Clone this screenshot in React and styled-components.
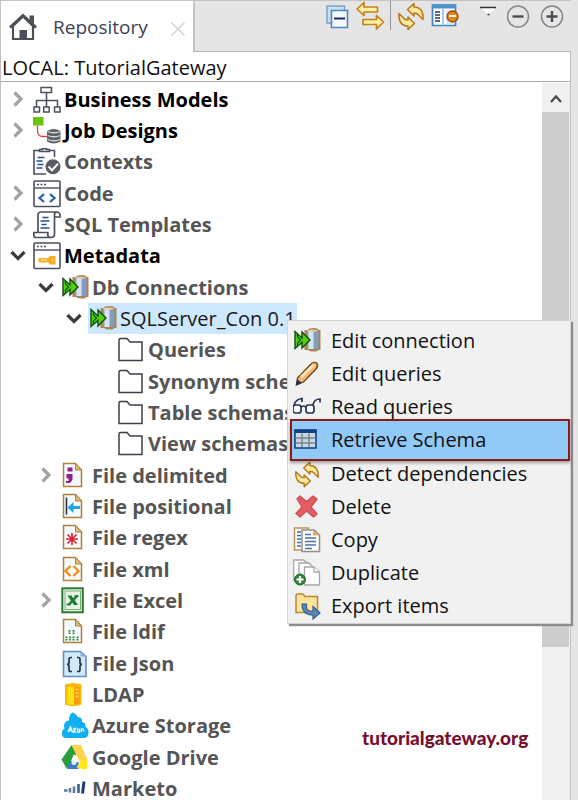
import { useState } from "react";
import styled, { createGlobalStyle, css } from "styled-components";

const GlobalStyle = createGlobalStyle`
  * {
    box-sizing: border-box;
  }

  body {
    margin: 0;
    background-color: #e5e5e5;
    font-family: "Open Sans", "Noto Sans", sans-serif;
  }

  button {
    border: none;
    background: none;
    padding: 0;
    margin: 0;
    font: inherit;
    color: inherit;
    cursor: pointer;
  }
`;

const Window = styled.main`
  position: relative;
  height: 100vh;
  padding-right: 7px;
  display: flex;
  flex-direction: column;
  overflow: hidden;
  background-color: #e5e5e5;
`;

const TabBar = styled.header`
  flex-shrink: 0;
  height: 52px;
  display: flex;
  justify-content: space-between;
  border-top: 1px solid #c4c4c4;
`;

const Tab = styled.div`
  width: 195px;
  display: flex;
  align-items: center;
  gap: 16px;
  padding: 0 7px 0 8px;
  background-color: #fff;
  border-right: 2px solid #c4c4c4;
  border-left: 1px solid #c4c4c4;
  border-radius: 0 2px 0 0;
  color: #3c4354;
  font-size: 19px;
  line-height: 28px;

  .close {
    margin-left: auto;
    padding-top: 4px;
  }
`;

const Toolbar = styled.div`
  flex: 1;
  display: flex;
  justify-content: flex-end;
  gap: 15px;
  padding-right: 4px;
  border-bottom: 1px solid #b4b4b4;
`;

const ToolGroup = styled.div`
  display: flex;
  gap: 4px;
`;

const ToolButton = styled.button`
  width: ${({ $narrow }) => ($narrow ? "24px" : "30px")};
  height: 30px;
`;

const Separator = styled.span`
  width: 1px;
  height: 29px;
  margin-right: 1px;
  background-color: #969696;
`;

const Panel = styled.section`
  flex: 1;
  min-height: 0;
  display: flex;
  flex-direction: column;
  background-color: #fff;
  border-left: 1px solid #c0c0c0;
  border-right: 1px solid #c0c0c0;
`;

const Branch = styled.div`
  flex-shrink: 0;
  height: 30px;
  padding: 3px 1px 0;
  border-bottom: 1px solid #a8a8a8;
  color: #111;
  font-size: 20px;
  line-height: 26px;
`;

const TreeArea = styled.div`
  flex: 1;
  min-height: 0;
  display: flex;
  padding-top: 1px;
`;

const Tree = styled.ul`
  flex: 1;
  margin: 0;
  padding: 1px 0 0 3px;
  list-style: none;
  overflow: hidden;
`;

const TreeRow = styled.li`
  display: flex;
  align-items: center;
  height: 31px;
  padding-left: ${({ $level }) => $level * 28}px;

  &:nth-child(3n) {
    height: 32px;
  }
`;

const Expander = styled.button`
  width: 28px;
  height: 28px;
  flex-shrink: 0;
`;

const TreeLabel = styled.button`
  height: 31px;
  display: flex;
  align-items: center;
  gap: 3px;
  padding: 0 1px;
  color: ${({ $strong }) => ($strong ? "#000" : "#555")};
  font-size: 20px;
  font-weight: 700;
  line-height: 28px;
  white-space: nowrap;

  ${({ $selected }) =>
    $selected &&
    css`
      background-color: #cde8ff;
      color: #1a1a1a;
      font-weight: 400;
    `}
`;

const ScrollTrack = styled.div`
  width: 28px;
  flex-shrink: 0;
  display: flex;
  flex-direction: column;
  background-color: #f0f0f0;
`;

const ScrollUp = styled.button`
  height: 29px;
`;

const ScrollThumb = styled.div`
  flex: 7;
  margin-right: 1px;
  background-color: #cdcdcd;
`;

const ScrollRest = styled.div`
  flex: 2;
`;

const Menu = styled.ul`
  position: absolute;
  top: 320px;
  left: 287px;
  width: 284px;
  margin: 0;
  padding: 3px 0 1px 2px;
  list-style: none;
  background-color: #f1f1f1;
  border: 1px solid #d4d4d4;
  box-shadow: 2px 2px 1px #8c8c8c;
`;

const MenuItem = styled.button`
  width: 100%;
  height: 33px;
  display: flex;
  align-items: center;
  gap: 10px;
  padding: 0 3px;
  color: #111;
  font-size: 20px;
  line-height: 28px;

  ${({ $active }) =>
    $active &&
    css`
      position: relative;
      height: 42px;
      margin: -4px 0;
      padding: 0 1px;
      background-color: #91c9f7;
      border: 2px solid #8e1a16;
      box-shadow: 0 2px 3px rgba(0, 0, 0, 0.35);
    `}
`;

const Watermark = styled.a`
  position: absolute;
  top: 726px;
  left: 362px;
  color: #75102f;
  font-family: Lato, sans-serif;
  font-size: 19px;
  font-weight: 900;
  line-height: 24px;
  text-decoration: none;
`;

const Svg = styled.svg`
  display: block;
  flex-shrink: 0;
`;

const Icon = ({ size = 28, width, children }) => (
  <Svg
    width={width || size}
    height={size}
    viewBox={`0 0 ${width || size} ${size}`}
    fill="none"
    aria-hidden="true"
  >
    {children}
  </Svg>
);

/* ---- tree icons ---- */

const Chevron = ({ open }) => (
  <Icon>
    {open ? (
      <path d="M7.500 10l6.500 6.500L20.500 10" stroke="#3c3c40" strokeWidth="3.200" />
    ) : (
      <path d="M10.500 6.500l6.500 6.500-6.500 6.500" stroke="#a3a3a3" strokeWidth="3.200" />
    )}
  </Icon>
);

const BusinessIcon = () => (
  <Icon>
    <g stroke="#4b5060" strokeWidth="1.500">
      <path d="M8 1.500h10.500v5H8zM13.500 7v14M3.500 21v-6.500h21V21" />
      <path d="M1 21h5.500v5H1zM10.700 21h5.500v5h-5.500zM21.500 21H27v5h-5.500z" fill="#fff" />
    </g>
  </Icon>
);

const JobIcon = () => (
  <Icon>
    <path d="M0 0h10.500v8.500H0z" fill="#68c40f" />
    <path d="M4.500 8.500v5q0 6 5 6H15" stroke="#cf4a44" strokeWidth="1.300" />
    <path d="M14 14q6.700-4 13.500 0v10.500q-6.800 4-13.500 0z" fill="#60646a" />
    <path
      d="M14.500 14.500q6.500 2.500 13 0M14.500 18.500q6.500 2.500 13 0M14.500 22.500q6.500 2.500 13 0"
      stroke="#d5d7da"
      strokeWidth="1.300"
    />
  </Icon>
);

const ContextIcon = () => (
  <Icon>
    <path d="M6 2.500H1V26h12M17 2.500h4.500V9" stroke="#4b5060" strokeWidth="1.600" />
    <path d="M6.500 3.500h10V1.500h-3V.7h-4v.8h-3z" stroke="#4b5060" strokeWidth="1.500" />
    <path d="M4.500 9.500h7M3.500 13h6M4.500 16.500h6M3.500 20h6" stroke="#254d9a" strokeWidth="1.400" />
    <circle cx="20" cy="18.700" r="7.500" fill="#585c66" />
    <path d="M15.500 18.500l3.500 3.700 6-6.500" stroke="#fff" strokeWidth="2" />
  </Icon>
);

const WindowFrame = () => (
  <>
    <rect x="1" y="1" width="26" height="25.500" rx="1" fill="#fff" stroke="#4b5060" strokeWidth="1.600" />
    <path d="M1 8h26" stroke="#4b5060" strokeWidth="1.400" />
    <path d="M4 4.500h10" stroke="#4b5060" strokeWidth="1.600" strokeDasharray="2 1.500" />
  </>
);

const CodeIcon = () => (
  <Icon>
    <WindowFrame />
    <path d="M11 14l-4.500 4 4.500 4M17 14l4.500 4-4.500 4" stroke="#1f66ad" strokeWidth="2.300" />
  </Icon>
);

const SqlIcon = () => (
  <Icon>
    <path
      d="M5 21V4q0-3 3-3h15q4 0 4 3v2h-5.500M21.500 6V23q0 3.500-3.500 3.500H3Q.8 26.500.8 24v-2.500h14V24q0 2.500 3.200 2.500M21.500 6V3.500q0-2 2-2"
      stroke="#4b5060"
      strokeWidth="1.700"
    />
    <path d="M9.500 6.500h6M7.500 10h9M8.500 13.500h5M7.500 17h9" stroke="#254d9a" strokeWidth="1.500" />
  </Icon>
);

const MetadataIcon = () => (
  <Icon>
    <WindowFrame />
    <path d="M5.500 16H15l2-2h5.500v8.500H17l-2-2H5.500z" fill="#faac24" />
    <path d="M8 18h6M18.500 18h2" stroke="#ffdf9c" strokeWidth="1.300" />
  </Icon>
);

const DbIcon = () => (
  <Icon>
    <path d="M11.500 3h3q1-2 6-2t5 2h2v20h-2q-1 1.500-5 1.500T15 23h-3.500z" fill="#a98555" />
    <path d="M14 4h11.500v18H14z" fill="#819ebf" />
    <path d="M15.500 4h5v18h-5z" fill="#d8e5f0" />
    <path d="M13 3.500q7-2 12.500 0-5 2.500-12.500 0z" fill="#e4cda6" />
    <path d="M2 4.500l7 6.500V5l8 8-8 8v-5.500L2 21.500z" fill="#4bd40c" stroke="#164b10" strokeWidth="1.400" />
    <path d="M4.500 7v3l3 3-3 3v3" stroke="#164b10" strokeWidth="1.200" />
  </Icon>
);

const FolderIcon = () => (
  <Icon>
    <path d="M2 24V4q0-1.500 1.500-1.500H10L13 6h12v18.500H2z" fill="#fff" stroke="#3e3e4a" strokeWidth="1.500" />
  </Icon>
);

const FileIcon = ({ children }) => (
  <Icon>
    <path d="M2.500 1.500h12L20.500 8v16.500h-18z" fill="#f3f9ff" stroke="#b18136" strokeWidth="1.500" />
    <path d="M14.500 1.500V8h6z" fill="#e2bc7a" stroke="#b18136" />
    {children}
  </Icon>
);

const DelimitedIcon = () => (
  <FileIcon>
    <path d="M6.500 5.500h5v4h-5zM5.500 12h6v6L9 21H5v-2h2.500v-2.500h-2z" fill="#93208f" />
  </FileIcon>
);

const PositionalIcon = () => (
  <FileIcon>
    <path d="M5.500 4.500v17" stroke="#243243" strokeWidth="1.600" />
    <path d="M6.500 14.500l6-5.500v4h6.500v3h-6.500v4z" fill="#1aa7ea" />
  </FileIcon>
);

const RegexIcon = () => (
  <FileIcon>
    <path
      d="M11 9v12M5 15h12M6.500 10.500l9 9M15.500 10.500l-9 9"
      stroke="#dd2430"
      strokeWidth="1.700"
    />
  </FileIcon>
);

const XmlIcon = () => (
  <FileIcon>
    <path
      d="M9.500 10L4.500 15l5 5M12.500 10l5 5-5 5"
      stroke="#ee9216"
      strokeWidth="2.400"
    />
  </FileIcon>
);

const ExcelIcon = () => (
  <Icon>
    <rect x="1.300" y="1.300" width="20.500" height="24" fill="#e5f4e4" stroke="#2f7a35" strokeWidth="2" />
    <rect x="4" y="4" width="15.500" height="18.500" stroke="#7db37d" />
    <path d="M6.500 8.500h4l6.500 9.500h-4z" fill="#1e7a2b" />
    <path d="M16.500 8.500L7.500 18" stroke="#1e7a2b" strokeWidth="2.500" />
    <path d="M13.500 9h4M5.500 17.500h4" stroke="#1e7a2b" strokeWidth="1.400" />
  </Icon>
);

const LdifIcon = () => (
  <FileIcon>
    <path
      d="M8.500 12v4M12.500 12v4M5.500 18.500v4M9 18.500v4M12.500 18.500v4M16.500 18.500v4"
      stroke="#27802d"
      strokeWidth="1.800"
      strokeDasharray="1.700 .8"
    />
  </FileIcon>
);

const JsonIcon = () => (
  <Icon>
    <path d="M2.500 1.500h17l5.500 5v20H2.500z" fill="#d4e8fa" stroke="#5a8fc7" strokeWidth="1.600" />
    <path d="M19.500 1.500v5H25z" fill="#87b2df" />
    <path
      d="M11 7.500H9.500q-1.500 0-1.500 2v3q0 2-2 2 2 0 2 2v3q0 2 1.500 2H11M16 7.500h1.500q1.500 0 1.500 2v3q0 2 2 2-2 0-2 2v3q0 2-1.500 2H16"
      stroke="#223344"
      strokeWidth="1.700"
    />
  </Icon>
);

const LdapIcon = () => (
  <Icon>
    <path d="M4 3.500Q12 .5 20.500 3.500v20Q12 27 4 23.500z" fill="#fdb705" />
    <path d="M6.500 6h6.500v17.500H6.500z" fill="#ffe30e" />
    <path d="M13 6h5.500v17H13z" fill="#fb9b0c" />
    <path d="M14.500 8.500h3M14.500 12h3M14.500 15.500h3" stroke="#ffd66b" strokeWidth="1.400" />
  </Icon>
);

const AzureIcon = () => (
  <Icon>
    <path
      d="M4 26Q.7 25 1 20.500q0-3 2.500-4Q2 12 5 9.500q1.500-1 3-1Q8 2 11.500.5q4 1.500 5 4.500 5 0 4.500 5 4 .5 3.500 5 3 1 3 5.500T24 26z"
      fill="#12aef2"
    />
    <path
      d="M7 20l2.500-5 2 5M8 18.500h3M12 16.500h2.500l-2.500 3.500h3M16.500 16.500v3.500h2v-3.500M20.500 20v-3h2M22 18.500h1.500"
      stroke="#e8f8ff"
      strokeWidth="1.500"
    />
  </Icon>
);

const DriveIcon = () => (
  <Icon>
    <path d="M10.500 1l5 8.500-7 12.500-3 2.500L.5 15.500z" fill="#2a9e3a" />
    <path d="M10.500 1h9.500l6.500 15H18z" fill="#ffd24c" />
    <path d="M8.500 18h9v7H6z" fill="#3b79cf" />
    <path d="M13 10l5 7h-8z" fill="#fff" />
    <circle cx="13" cy="18.500" r="2.500" fill="#e8f1fb" />
    <path d="M18 15.500h8.500v8q-2 3-5 1.500l-6-1.500q1-3 3-3z" fill="#ffe719" />
  </Icon>
);

const MarketoIcon = () => (
  <Icon>
    <path d="M3 15.500h3.500M9 13v4.500M13 11.500v6.500" stroke="#5b7aa4" strokeWidth="2.500" />
    <path d="M17.500 9v9" stroke="#39608f" strokeWidth="2.600" />
    <path d="M23 6.500l-1.500 12" stroke="#1d3f77" strokeWidth="3" />
  </Icon>
);

/* ---- tab and toolbar icons ---- */

const HomeIcon = () => (
  <Icon>
    <path d="M20.500 2.500H25V11l-4.500-4z" fill="#4b5058" />
    <path d="M4 13v13h20V13L14 3.500z" fill="#fff" stroke="#4b5058" strokeWidth="2.200" />
    <path d="M1 14.500L14 2.500l13 12" stroke="#4b5058" strokeWidth="3" />
    <path d="M10.500 17h7.500v10h-7.500z" fill="#4b5058" />
  </Icon>
);

const CloseIcon = () => (
  <Icon size={16}>
    <path d="M1.500 1.500l13 13M14.500 1.500l-13 13" stroke="#cfcfcf" strokeWidth="1.400" />
  </Icon>
);

const CollapseAllIcon = () => (
  <Icon size={30}>
    <path d="M5 5h17.500v17H5z" fill="#c9dff2" stroke="#7aa3cc" strokeWidth="1.500" />
    <path d="M9.500 9.500h16v17h-16z" fill="#f2faff" stroke="#4f86bd" strokeWidth="1.600" />
    <path d="M12 17.500h11" stroke="#162a5c" strokeWidth="2" />
  </Icon>
);

const LinkIcon = () => (
  <Icon size={30}>
    <g fill="#fff0a8" stroke="#c5821a" strokeWidth="1.700" strokeLinejoin="round">
      <path d="M1 8l7-6.500V6h13.500v5H8v3.500z" />
      <path d="M27.500 21l-7-6.500V18.500H7v5h13.500V28z" />
    </g>
  </Icon>
);

const refreshArrow = "M11.500 8.500L18 2.500v3.500c6 0 9.500 4 9 12.500L22.500 14c-1-1.500-2.500-2-4.500-2v3z";

const RefreshIcon = ({ size = 30 }) => (
  <Svg width={size} height={size} viewBox="0 0 30 30" aria-hidden="true">
    <g fill="#ffe9a0" stroke="#b97a1d" strokeWidth="1.600" strokeLinejoin="round">
      <path d={refreshArrow} />
      <path d={refreshArrow} transform="rotate(180 15 15.500)" />
    </g>
  </Svg>
);

const FilterIcon = () => (
  <Icon size={30}>
    <path d="M2.500 4h23v20.500h-23z" fill="#fff" stroke="#3c86c2" strokeWidth="1.700" />
    <path d="M2 3.500h24v4H2z" fill="#4b94cc" />
    <path d="M13 7.500v17" stroke="#8eb9dc" strokeWidth="1.500" />
    <path d="M5 11h5M5 14h5M5 17h5M5 20h5" stroke="#28374d" strokeWidth="1.300" />
    <path d="M16 9h8v14h-8z" fill="#d5e9f8" />
    <circle cx="22.500" cy="15.500" r="5.500" fill="#e0851d" stroke="#a24a10" strokeWidth="1.300" />
    <path d="M19 15h7" stroke="#fff3dd" strokeWidth="2" />
  </Icon>
);

const ViewMenuIcon = () => (
  <Icon size={30} width={24}>
    <path d="M6 6.500h15L13.500 14z" fill="#fff" />
    <path d="M5 6.500h16M12.500 13.500h2" stroke="#303030" strokeWidth="1.500" />
  </Icon>
);

const CircleIcon = ({ plus }) => (
  <Icon size={30}>
    <circle cx="15" cy="15.500" r="10.500" stroke="#878787" strokeWidth="1.500" />
    <path d={plus ? "M9.500 15.500h11M15 10v11" : "M9.500 15.500h11"} stroke="#484c55" strokeWidth="2.400" />
  </Icon>
);

/* ---- menu icons ---- */

const PencilIcon = () => (
  <Icon>
    <path d="M4.500 18L18 4q3.500-3 6-.5 1.500 2.500-1 5.500L10.500 22 4 24.500z" fill="#eebc77" stroke="#764619" strokeWidth="1.400" />
    <path d="M8 17L20.500 5" stroke="#ffe4b5" strokeWidth="2.500" />
    <path d="M4 19l5 4-6.500 3z" fill="#27314e" />
  </Icon>
);

const GlassesIcon = () => (
  <Icon>
    <g stroke="#233457" strokeWidth="1.700">
      <rect x="0" y="12" width="8" height="8" rx="2.500" fill="#fff" />
      <rect x="13" y="12" width="8" height="8" rx="2.500" fill="#fff" />
      <path d="M8 14.500q2.500-3 5 0M1 12q2-6 8-6.500v3.500M20 12q1-6 7-6v3.500" />
    </g>
  </Icon>
);

const TableIcon = () => (
  <Icon>
    <path d="M2 4h21v18H2z" fill="#c7d9e6" stroke="#163f85" strokeWidth="1.600" />
    <path d="M1.500 3.500h22V7h-22z" fill="#163f85" />
    <path d="M2.500 12h20M2.500 17h20M9 7.500V21M16 7.500V21" stroke="#7c8487" strokeWidth="1.500" />
  </Icon>
);

const DeleteIcon = () => (
  <Icon>
    <path
      d="M4 6l3-3 6.500 5.500L20 3l4 3-6 8 6 7-3.500 3-7-6-6.500 6-4-3.500L9 14z"
      fill="#e35e62"
      stroke="#cd5054"
      strokeWidth="1.400"
      strokeLinejoin="round"
    />
  </Icon>
);

const CopyIcon = () => (
  <Icon>
    <path d="M1.500 2h14v22h-14z" fill="#fff" stroke="#bb9559" strokeWidth="1.500" />
    <path d="M4 6h4M4 9.500h4M4 13h4M4 16.500h4M4 20h4" stroke="#426b9e" strokeWidth="1.300" />
    <path d="M9 4h12l5.500 5v16.500H9z" fill="#fff" stroke="#948d83" strokeWidth="1.500" />
    <path d="M20 4v5.500h6.500z" fill="#e1ac60" />
    <path d="M12 8.500h6M12 12h11M12 15.500h11M12 19h11M12 22.500h7" stroke="#4474ab" strokeWidth="1.500" />
  </Icon>
);

const DuplicateIcon = () => (
  <Icon>
    <g fill="#fff" stroke="#a7a7a7" strokeWidth="1.300">
      <path d="M.7 1h10l4 3.500V21H.7z" />
      <path d="M6 4h10l4 4v15H6z" />
      <path d="M11.500 8h9.500l5.500 5v13h-15z" />
      <path d="M21 8v5h5.500" />
    </g>
    <circle cx="7" cy="20.500" r="5.500" fill="#328637" stroke="#276b2c" />
    <path d="M3.500 20.500h7M7 17v7" stroke="#fff" strokeWidth="2.200" />
  </Icon>
);

const ExportIcon = () => (
  <Icon>
    <path d="M3 4q0-2 1.500-2H10l2 2.500h12.500v16H3z" fill="#ffe49b" stroke="#b98833" strokeWidth="1.500" />
    <path d="M9 12h4.500v3q0 4 4 4H20v-4.500l7 6.500-7 6v-4q-11 0-11-11z" fill="#5987b6" stroke="#365f8e" strokeWidth="1.200" />
  </Icon>
);

const treeItems = [
  { label: "Business Models", icon: BusinessIcon, level: 0, state: "closed", strong: true },
  { label: "Job Designs", icon: JobIcon, level: 0, state: "closed", strong: true },
  { label: "Contexts", icon: ContextIcon, level: 0 },
  { label: "Code", icon: CodeIcon, level: 0, state: "closed" },
  { label: "SQL Templates", icon: SqlIcon, level: 0, state: "closed" },
  { label: "Metadata", icon: MetadataIcon, level: 0, state: "open", strong: true },
  { label: "Db Connections", icon: DbIcon, level: 1, state: "open" },
  { label: "SQLServer_Con 0.1", icon: DbIcon, level: 2, state: "open" },
  { label: "Queries", icon: FolderIcon, level: 3 },
  { label: "Synonym schemas", icon: FolderIcon, level: 3 },
  { label: "Table schemas", icon: FolderIcon, level: 3 },
  { label: "View schemas", icon: FolderIcon, level: 3 },
  { label: "File delimited", icon: DelimitedIcon, level: 1, state: "closed" },
  { label: "File positional", icon: PositionalIcon, level: 1 },
  { label: "File regex", icon: RegexIcon, level: 1 },
  { label: "File xml", icon: XmlIcon, level: 1 },
  { label: "File Excel", icon: ExcelIcon, level: 1, state: "closed" },
  { label: "File ldif", icon: LdifIcon, level: 1 },
  { label: "File Json", icon: JsonIcon, level: 1 },
  { label: "LDAP", icon: LdapIcon, level: 1 },
  { label: "Azure Storage", icon: AzureIcon, level: 1 },
  { label: "Google Drive", icon: DriveIcon, level: 1 },
  { label: "Marketo", icon: MarketoIcon, level: 1 },
];

const menuItems = [
  { label: "Edit connection", icon: DbIcon },
  { label: "Edit queries", icon: PencilIcon },
  { label: "Read queries", icon: GlassesIcon },
  { label: "Retrieve Schema", icon: TableIcon },
  { label: "Detect dependencies", icon: RefreshIcon },
  { label: "Delete", icon: DeleteIcon },
  { label: "Copy", icon: CopyIcon },
  { label: "Duplicate", icon: DuplicateIcon },
  { label: "Export items", icon: ExportIcon },
];

const App = () => {
  const [selected, setSelected] = useState("SQLServer_Con 0.1");
  const [active, setActive] = useState("Retrieve Schema");

  return (
    <>
      <GlobalStyle />
      <Window>
        <TabBar>
          <Tab>
            <HomeIcon />
            <span>Repository</span>
            <button className="close" aria-label="Close">
              <CloseIcon />
            </button>
          </Tab>
          <Toolbar>
            <ToolGroup>
              <ToolButton aria-label="Collapse all">
                <CollapseAllIcon />
              </ToolButton>
              <ToolButton aria-label="Link with editor">
                <LinkIcon />
              </ToolButton>
              <Separator />
              <ToolButton aria-label="Refresh">
                <RefreshIcon />
              </ToolButton>
              <ToolButton aria-label="Filter">
                <FilterIcon />
              </ToolButton>
            </ToolGroup>
            <ToolGroup>
              <ToolButton $narrow aria-label="View menu">
                <ViewMenuIcon />
              </ToolButton>
              <ToolButton aria-label="Minimize">
                <CircleIcon />
              </ToolButton>
              <ToolButton aria-label="Maximize">
                <CircleIcon plus />
              </ToolButton>
            </ToolGroup>
          </Toolbar>
        </TabBar>

        <Panel>
          <Branch>LOCAL: TutorialGateway</Branch>
          <TreeArea>
            <Tree>
              {treeItems.map(({ label, icon: ItemIcon, level, state, strong }) => (
                <TreeRow key={label} $level={level}>
                  <Expander
                    as={state ? "button" : "span"}
                    aria-label={state ? `Toggle ${label}` : undefined}
                  >
                    {state && <Chevron open={state === "open"} />}
                  </Expander>
                  <TreeLabel
                    $strong={strong}
                    $selected={selected === label}
                    onClick={() => setSelected(label)}
                  >
                    <ItemIcon />
                    <span>{label}</span>
                  </TreeLabel>
                </TreeRow>
              ))}
            </Tree>
            <ScrollTrack>
              <ScrollUp aria-label="Scroll up">
                <Icon>
                  <path d="M9 18l5-5.500 5 5.500" stroke="#484848" strokeWidth="2.200" />
                </Icon>
              </ScrollUp>
              <ScrollThumb />
              <ScrollRest />
            </ScrollTrack>
          </TreeArea>
        </Panel>

        <Menu>
          {menuItems.map(({ label, icon: ItemIcon }) => (
            <li key={label}>
              <MenuItem $active={active === label} onMouseEnter={() => setActive(label)}>
                <ItemIcon size={28} />
                <span>{label}</span>
              </MenuItem>
            </li>
          ))}
        </Menu>

        <Watermark href="#">tutorialgateway.org</Watermark>
      </Window>
    </>
  );
};

export default App;
